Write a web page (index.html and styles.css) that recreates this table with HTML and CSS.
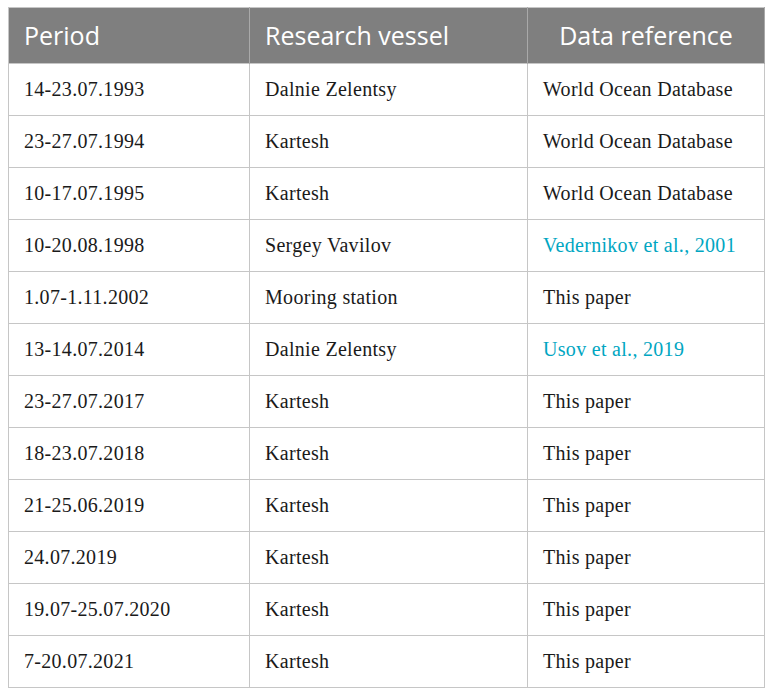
FILE: index.html
```html
<!DOCTYPE html>
<html>
<head>
<meta charset="utf-8">
<link rel="stylesheet" href="styles.css">
</head>
<body>
<table class="data">
  <colgroup>
    <col class="c1"><col class="c2"><col class="c3">
  </colgroup>
  <thead>
    <tr><th>Period</th><th>Research vessel</th><th class="center">Data reference</th></tr>
  </thead>
  <tbody>
    <tr><td>14-23.07.1993</td><td>Dalnie Zelentsy</td><td>World Ocean Database</td></tr>
    <tr><td>23-27.07.1994</td><td>Kartesh</td><td>World Ocean Database</td></tr>
    <tr><td>10-17.07.1995</td><td>Kartesh</td><td>World Ocean Database</td></tr>
    <tr><td>10-20.08.1998</td><td>Sergey Vavilov</td><td><span class="link">Vedernikov et al., 2001</span></td></tr>
    <tr><td>1.07-1.11.2002</td><td>Mooring station</td><td>This paper</td></tr>
    <tr><td>13-14.07.2014</td><td>Dalnie Zelentsy</td><td><span class="link">Usov et al., 2019</span></td></tr>
    <tr><td>23-27.07.2017</td><td>Kartesh</td><td>This paper</td></tr>
    <tr><td>18-23.07.2018</td><td>Kartesh</td><td>This paper</td></tr>
    <tr><td>21-25.06.2019</td><td>Kartesh</td><td>This paper</td></tr>
    <tr><td>24.07.2019</td><td>Kartesh</td><td>This paper</td></tr>
    <tr><td>19.07-25.07.2020</td><td>Kartesh</td><td>This paper</td></tr>
    <tr><td>7-20.07.2021</td><td>Kartesh</td><td>This paper</td></tr>
  </tbody>
</table>
</body>
</html>
```
FILE: styles.css
```css
html, body {
  margin: 0;
  padding: 0;
  background: #ffffff;
}
body {
  padding: 7px 0 0 8px;
}
.data {
  border-collapse: collapse;
  table-layout: fixed;
  width: 756px;
  border: 1px solid #c6c6c6;
}
.c1 { width: 241px; }
.c2 { width: 278px; }
.c3 { width: 237px; }
.data th {
  background: #7f7f7f;
  color: #ffffff;
  font-family: "Open Sans", "Noto Sans", sans-serif;
  font-weight: 400;
  font-size: 25px;
  text-align: left;
  height: 56px;
  padding: 0 0 2px 15px;
  border-right: 1px solid #a9a9a9;
  box-sizing: border-box;
}
.data th.center {
  text-align: center;
  padding-left: 0;
}
.data td {
  font-family: "Liberation Serif", "Times New Roman", serif;
  font-size: 20px;
  letter-spacing: 0.3px;
  color: #1a1a1a;
  height: 52px;
  padding: 0 0 1px 15px;
  border: 1px solid #c6c6c6;
  box-sizing: border-box;
  white-space: nowrap;
}
.link {
  color: #00a6c2;
}
```
